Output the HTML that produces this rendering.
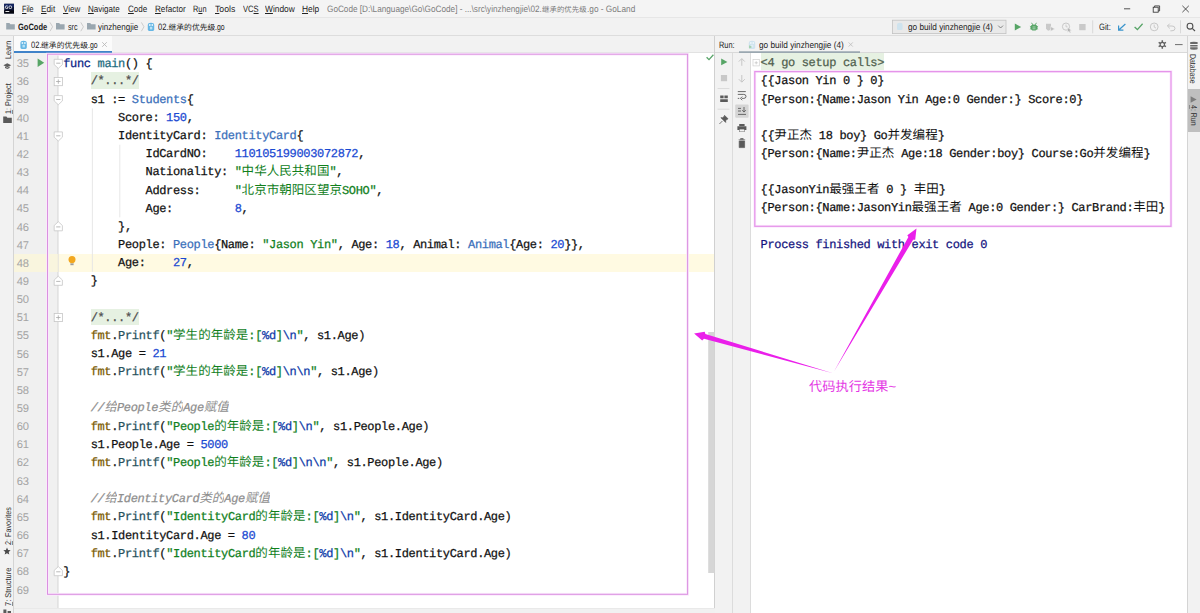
<!DOCTYPE html>
<html lang="zh">
<head>
<meta charset="utf-8">
<title>GoCode - GoLand</title>
<style>
*{box-sizing:border-box;margin:0;padding:0}
html,body{width:1200px;height:613px;overflow:hidden;background:#fff}
body{font-family:"Liberation Sans","Noto Sans CJK SC",sans-serif;color:#1a1a1a;text-rendering:geometricPrecision}
#app{position:relative;width:1200px;height:613px;overflow:hidden;background:#f2f2f2}
.abs{position:absolute}
/* ---------- top bars ---------- */
#menubar{position:absolute;left:0;top:0;width:1200px;height:18px;background:#f4f4f4;border-bottom:1px solid #e6e6e6}
#navbar{position:absolute;left:0;top:18px;width:1200px;height:18px;background:#f2f2f2;border-bottom:1px solid #dddddd}
.u{position:absolute;white-space:pre;font-size:9.2px;line-height:11px;transform-origin:0 0;color:#222}
.u u{text-decoration:underline;text-underline-offset:1px;text-decoration-thickness:0.7px}
.cj{display:inline-block;overflow:hidden;white-space:nowrap;vertical-align:top;letter-spacing:0;text-align:justify;text-align-last:justify}
.cj{position:relative}
/* ---------- side strips ---------- */
#lstrip{position:absolute;left:0;top:36px;width:14px;height:577px;background:#f2f2f2;border-right:1px solid #d4d4d4}
#rstrip{position:absolute;left:1187px;top:36px;width:13px;height:577px;background:#f2f2f2;border-left:1px solid #d4d4d4}
.vt u{text-decoration-color:#8c8c8c;text-decoration-thickness:0.6px;text-underline-offset:0.5px}
.vt{position:absolute;white-space:nowrap;font-size:8.4px;color:#2e2e2e;transform-origin:0 0;line-height:10px}
/* ---------- editor ---------- */
#tabs{position:absolute;left:14px;top:36px;width:701px;height:17px;background:#f2f2f2;border-bottom:1px solid #e2e2e2}
#tab1{position:absolute;left:0;top:0;width:98px;height:17px;background:#fbfbfb;border-bottom:2px solid #4083c9}
#editor{position:absolute;left:14px;top:53px;width:700px;height:555px;background:#fff;overflow:hidden}
#gutter{position:absolute;left:0;top:0;width:44px;height:555px;background:#f0f0f0;border-right:1px solid #e4e4e4}
#curline{position:absolute;left:0;top:201px;width:700px;height:18.1px;background:#fffae2}
#curline i{position:absolute;left:0;top:0;width:44px;height:18.1px;background:#f9f5de}
.ln{position:absolute;left:2.7px;margin-top:1.3px;width:14px;font-family:"Liberation Sans",sans-serif;font-size:11.2px;line-height:18.15px;color:#a4a4a4;letter-spacing:-0.2px;white-space:pre}
pre{font-family:"Liberation Mono","Noto Sans CJK SC",monospace;font-size:12px;letter-spacing:-0.34px;line-height:18.15px;white-space:pre;color:#111;-webkit-text-stroke:0.25px currentColor}
#code{position:absolute;left:49.2px;top:1.5px}
pre .cj{font-size:12.5px;-webkit-text-stroke:0}
.k{color:#0a1f86}.fn{color:#1d6c80}.ty{color:#3a6fba}.n{color:#1a49d2}.s{color:#10801c}.e{color:#0e3aa8}
.pk{color:#7a5a00}.c{color:#8e8e8e;font-style:italic}.fd{background:#e6f1e2;color:#4f4f4f;padding:2.2px 0 0.8px}.call{color:#26505c}
.guide{position:absolute;width:1px;background:#e6e6e6}
/* ---------- run panel ---------- */
#run{position:absolute;left:714px;top:36px;width:473px;height:577px;background:#fff;border-left:1px solid #d0d0d0}
#runhead{position:absolute;left:0;top:0;width:473px;height:17px;background:#f2f2f2;border-bottom:1px solid #d9d9d9}
#rt1{position:absolute;left:0;top:17px;width:18px;height:560px;background:#f2f2f2;border-right:1px solid #dcdcdc}
#rt2{position:absolute;left:18px;top:17px;width:18px;height:560px;background:#f2f2f2;border-right:1px solid #dcdcdc}
#console{position:absolute;left:45.6px;top:18.2px}
#console .fd{background:#e6f1e2;color:#50604e;padding:3.2px 0 0.6px}
.pf{color:#141480}
svg{position:absolute;left:0;top:0;overflow:visible}
</style>
</head>
<body>
<div id="app">


<!-- MENUBAR -->
<div id="menubar">
<span class="u" style="left:22px;top:4.3px;transform:scaleX(0.783)"><u>F</u>ile</span>
<span class="u" style="left:41px;top:4.3px;transform:scaleX(0.896)"><u>E</u>dit</span>
<span class="u" style="left:63px;top:4.3px;transform:scaleX(0.871)"><u>V</u>iew</span>
<span class="u" style="left:88px;top:4.3px;transform:scaleX(0.871)"><u>N</u>avigate</span>
<span class="u" style="left:128px;top:4.3px;transform:scaleX(0.874)"><u>C</u>ode</span>
<span class="u" style="left:155px;top:4.3px;transform:scaleX(0.884)"><u>R</u>efactor</span>
<span class="u" style="left:193.3px;top:4.3px;transform:scaleX(0.801)">R<u>u</u>n</span>
<span class="u" style="left:215px;top:4.3px;transform:scaleX(0.942)"><u>T</u>ools</span>
<span class="u" style="left:243px;top:4.3px;transform:scaleX(0.825)">VC<u>S</u></span>
<span class="u" style="left:265px;top:4.3px;transform:scaleX(0.912)"><u>W</u>indow</span>
<span class="u" style="left:301.7px;top:4.3px;transform:scaleX(0.91)"><u>H</u>elp</span>
<span class="u" style="left:326.8px;top:4.3px;transform:scaleX(0.893);color:#7c7c7c">GoCode [D:\Language\Go\GoCode] - ...\src\yinzhengjie\02.</span>
<span class="cj abs" style="left:542px;top:4.3px;width:44.6px;font-size:7.4px;line-height:11px;color:#7c7c7c">继承的优先级</span>
<span class="u" style="left:586.6px;top:4.3px;transform:scaleX(0.9);color:#7c7c7c">.go - GoLand</span>
</div>

<!-- NAVBAR -->
<div id="navbar">
<span class="u" style="left:18px;top:3.8px;transform:scaleX(0.817);font-weight:bold">GoCode</span>
<span class="u" style="left:68px;top:3.8px;transform:scaleX(0.784)">src</span>
<span class="u" style="left:98px;top:3.8px;transform:scaleX(0.874)">yinzhengjie</span>
<span class="u" style="left:158px;top:3.8px;transform:scaleX(0.822)">02.</span>
<span class="cj abs" style="left:168.4px;top:3.8px;width:47px;font-size:7.8px;line-height:11px;color:#222">继承的优先级</span>
<span class="u" style="left:215.4px;top:3.8px;transform:scaleX(0.751)">.go</span>
</div>

<!-- LEFT STRIP -->
<div id="lstrip"></div>

<!-- TABS -->
<div id="tabs"><div id="tab1"></div>
<span class="u" style="left:16.5px;top:3.6px;transform:scaleX(0.822)">02.</span>
<span class="cj abs" style="left:27px;top:3.6px;width:47px;font-size:7.8px;line-height:11px;color:#222">继承的优先级</span>
<span class="u" style="left:74px;top:3.6px;transform:scaleX(0.751)">.go</span>
</div>

<!-- EDITOR -->
<div id="editor">
<div id="gutter"></div>
<div id="curline"><i></i></div>
<div id="lnums">
<div class="ln" style="top:0.90px">35</div>
<div class="ln" style="top:19.05px">36</div>
<div class="ln" style="top:37.20px">39</div>
<div class="ln" style="top:55.35px">40</div>
<div class="ln" style="top:73.50px">41</div>
<div class="ln" style="top:91.65px">42</div>
<div class="ln" style="top:109.80px">43</div>
<div class="ln" style="top:127.95px">44</div>
<div class="ln" style="top:146.10px">45</div>
<div class="ln" style="top:164.25px">46</div>
<div class="ln" style="top:182.40px">47</div>
<div class="ln" style="top:200.55px">48</div>
<div class="ln" style="top:218.70px">49</div>
<div class="ln" style="top:236.85px">50</div>
<div class="ln" style="top:255.00px">51</div>
<div class="ln" style="top:273.15px">55</div>
<div class="ln" style="top:291.30px">56</div>
<div class="ln" style="top:309.45px">57</div>
<div class="ln" style="top:327.60px">58</div>
<div class="ln" style="top:345.75px">59</div>
<div class="ln" style="top:363.90px">60</div>
<div class="ln" style="top:382.05px">61</div>
<div class="ln" style="top:400.20px">62</div>
<div class="ln" style="top:418.35px">63</div>
<div class="ln" style="top:436.50px">64</div>
<div class="ln" style="top:454.65px">65</div>
<div class="ln" style="top:472.80px">66</div>
<div class="ln" style="top:490.95px">67</div>
<div class="ln" style="top:509.10px">68</div>
<div class="ln" style="top:527.25px">69</div>
</div>
<pre id="code"><span class="k">func</span> <span class="fn">main</span>() {
    <span class="fd">/*...*/</span>
    s1 := <span class="ty">Students</span>{
        Score: <span class="n">150</span>,
        IdentityCard: <span class="ty">IdentityCard</span>{
            IdCardNO:    <span class="n">110105199003072872</span>,
            Nationality: <span class="s">"<span class="cj" style="width:87.85px">中华人民共和国</span>"</span>,
            Address:     <span class="s">"<span class="cj" style="width:100.4px">北京市朝阳区望京</span>SOHO"</span>,
            Age:         <span class="n">8</span>,
        },
        People: <span class="ty">People</span>{Name: <span class="s">"Jason Yin"</span>, Age: <span class="n">18</span>, Animal: <span class="ty">Animal</span>{Age: <span class="n">20</span>}},
        Age:    <span class="n">27</span>,
    }

    <span class="fd">/*...*/</span>
    <span class="pk">fmt</span>.<span class="call">Printf</span>(<span class="s">"<span class="cj" style="width:75.3px">学生的年龄是</span>:[<span class="e">%d</span>]<span class="e">\n</span>"</span>, s1.Age)
    s1.Age = <span class="n">21</span>
    <span class="pk">fmt</span>.<span class="call">Printf</span>(<span class="s">"<span class="cj" style="width:75.3px">学生的年龄是</span>:[<span class="e">%d</span>]<span class="e">\n\n</span>"</span>, s1.Age)

    <span class="c">//<span class="cj" style="width:12.55px">给</span>People<span class="cj" style="width:25.1px">类的</span>Age<span class="cj" style="width:25.1px">赋值</span></span>
    <span class="pk">fmt</span>.<span class="call">Printf</span>(<span class="s">"People<span class="cj" style="width:50.2px">的年龄是</span>:[<span class="e">%d</span>]<span class="e">\n</span>"</span>, s1.People.Age)
    s1.People.Age = <span class="n">5000</span>
    <span class="pk">fmt</span>.<span class="call">Printf</span>(<span class="s">"People<span class="cj" style="width:50.2px">的年龄是</span>:[<span class="e">%d</span>]<span class="e">\n\n</span>"</span>, s1.People.Age)

    <span class="c">//<span class="cj" style="width:12.55px">给</span>IdentityCard<span class="cj" style="width:25.1px">类的</span>Age<span class="cj" style="width:25.1px">赋值</span></span>
    <span class="pk">fmt</span>.<span class="call">Printf</span>(<span class="s">"IdentityCard<span class="cj" style="width:50.2px">的年龄是</span>:[<span class="e">%d</span>]<span class="e">\n</span>"</span>, s1.IdentityCard.Age)
    s1.IdentityCard.Age = <span class="n">80</span>
    <span class="pk">fmt</span>.<span class="call">Printf</span>(<span class="s">"IdentityCard<span class="cj" style="width:50.2px">的年龄是</span>:[<span class="e">%d</span>]<span class="e">\n</span>"</span>, s1.IdentityCard.Age)
}
</pre>
</div>

<!-- RUN PANEL -->
<div id="run">
<div id="runhead">
<span class="u" style="left:4.4px;top:4px;transform:scaleX(0.803)">Run:</span>
<span class="u" style="left:43.6px;top:4px;transform:scaleX(0.897)">go build yinzhengjie (4)</span>
</div>
<div id="rt1"></div>
<div id="rt2"></div>
<pre id="console"><span class="fd">&lt;4 go setup calls&gt;</span>
{{Jason Yin 0 } 0}
{Person:{Name:Jason Yin Age:0 Gender:} Score:0}

{{<span class="cj" style="width:37.65px">尹正杰</span> 18 boy} Go<span class="cj" style="width:50.2px">并发编程</span>}
{Person:{Name:<span class="cj" style="width:37.65px">尹正杰</span> Age:18 Gender:boy} Course:Go<span class="cj" style="width:50.2px">并发编程</span>}

{{JasonYin<span class="cj" style="width:50.2px">最强王者</span> 0 } <span class="cj" style="width:25.1px">丰田</span>}
{Person:{Name:JasonYin<span class="cj" style="width:50.2px">最强王者</span> Age:0 Gender:} CarBrand:<span class="cj" style="width:25.1px">丰田</span>}

<span class="pf">Process finished with exit code 0</span>
</pre>
</div>

<!-- RIGHT STRIP -->
<div id="rstrip"><div class="abs" style="left:0;top:53.1px;width:13px;height:43.4px;background:#bfbfbf"></div></div>

<!-- bottom bar -->
<div class="abs" style="left:14px;top:608px;width:701px;height:5px;background:#f1f1f1;border-top:1px solid #e9e9e9"></div>

<div class="vt" style="left:3.2px;top:59.2px;transform:rotate(-90deg) scaleX(0.85)">Learn</div>
<div class="vt" style="left:3.2px;top:114.2px;transform:rotate(-90deg) scaleX(0.87)"><u>1</u>: Project</div>
<div class="vt" style="left:3.2px;top:544.6px;transform:rotate(-90deg) scaleX(0.864)"><u>2</u>: Favorites</div>
<div class="vt" style="left:3.2px;top:605.9px;transform:rotate(-90deg) scaleX(0.885)"><u>7</u>: Structure</div>
<div class="vt" style="left:1198.4px;top:53.6px;transform:rotate(90deg) scaleX(0.828)">Database</div>
<div class="vt" style="left:1198.6px;top:105.4px;transform:rotate(90deg) scaleX(0.83)"><u>4</u>: Run</div>
<!-- ICONS -->
<svg id="icons" width="1200" height="613" viewBox="0 0 1200 613">
<rect x="4.2" y="3.8" width="9.8" height="9.7" fill="#0b1438"/><rect x="4.2" y="3.8" width="9.8" height="3.2" fill="#13245e"/><rect x="4.2" y="10.2" width="9.8" height="3.3" fill="#04060f"/>
<path d="M7.6,5.9 h-1.3 q-0.8,0 -0.8,0.8 v1 q0,0.8 0.8,0.8 h1.3 v-1.3 h-0.8" fill="none" stroke="#fff" stroke-width="0.8"/>
<rect x="9" y="5.9" width="2.6" height="2.6" rx="0.9" fill="none" stroke="#fff" stroke-width="0.8"/>
<rect x="5.4" y="11" width="3.9" height="0.9" fill="#fff"/>
<path d="M1124,8.8 h6.2" stroke="#2b2b2b" stroke-width="0.8"/>
<path d="M1154.6,7.2 v-1.3 h5 v5 h-1.3" fill="none" stroke="#2b2b2b" stroke-width="0.8"/><rect x="1153.2" y="7.2" width="5" height="5" fill="none" stroke="#2b2b2b" stroke-width="0.8"/>
<path d="M1182.4,5.8 l6.4,6.4 M1188.8,5.8 l-6.4,6.4" stroke="#2b2b2b" stroke-width="0.8"/>
<path d="M6.2,23.0 h3.2 l1,1.2 h4.4 v5.3 h-8.6 z" fill="#9aa7b0"/>
<path d="M56.0,23.0 h3.2 l1,1.2 h4.4 v5.3 h-8.6 z" fill="#9aa7b0"/>
<path d="M87.0,23.0 h3.2 l1,1.2 h4.4 v5.3 h-8.6 z" fill="#9aa7b0"/>
<path d="M50.0,22.4 l2.6,4.4 l-2.6,4.4" fill="none" stroke="#c2c2c2" stroke-width="0.8"/>
<path d="M80.8,22.4 l2.6,4.4 l-2.6,4.4" fill="none" stroke="#c2c2c2" stroke-width="0.8"/>
<path d="M141.4,22.4 l2.6,4.4 l-2.6,4.4" fill="none" stroke="#c2c2c2" stroke-width="0.8"/>
<path d="M147.8,25.2 q0,-2.4 3.2,-2.4 q3.2,0 3.2,2.4 v4.4 q0,1.4 -1.4,1.4 h-3.6 q-1.4,0 -1.4,-1.4 z" fill="#66b6e4"/><circle cx="149.8" cy="25.0" r="0.9" fill="#e8f6fd"/><circle cx="152.3" cy="25.0" r="0.9" fill="#e8f6fd"/><path d="M149.9,26.8 h2.4 v2.6 h-2.4 z" fill="#b9e2f5"/>
<path d="M20.4,43.2 q0,-2.4 3.2,-2.4 q3.2,0 3.2,2.4 v4.4 q0,1.4 -1.4,1.4 h-3.6 q-1.4,0 -1.4,-1.4 z" fill="#66b6e4"/><circle cx="22.4" cy="43.0" r="0.9" fill="#e8f6fd"/><circle cx="24.9" cy="43.0" r="0.9" fill="#e8f6fd"/><path d="M22.5,44.8 h2.4 v2.6 h-2.4 z" fill="#b9e2f5"/>
<path d="M102.2,42.2 l4.6,4.6 M106.8,42.2 l-4.6,4.6" stroke="#b4b4b4" stroke-width="0.8"/>
<rect x="892.4" y="20.2" width="113.6" height="13.4" fill="#e9e9e9" stroke="#c2c2c2" stroke-width="0.8"/>
<path d="M897.0,25.0 q0,-2.2 2.8,-2.2 q2.8,0 2.8,2.2 v3.8 q0,1.2 -1.2,1.2 h-3.2 q-1.2,0 -1.2,-1.2 z" fill="#cfe3ee"/>
<path d="M998.2,25.6 l2.4,2.4 l2.4,-2.4" fill="none" stroke="#6a6a6a" stroke-width="0.8"/>
<path d="M1014.8,23.6 l6.4,3.4 l-6.4,3.4 z" fill="#57a566"/>
<path d="M1032.7,24.8 l-1.1,-2 M1035.3,24.8 l1.1,-2" stroke="#57a566" stroke-width="0.9"/><ellipse cx="1034" cy="27.5" rx="3.5" ry="3.1" fill="#57a566"/><path d="M1029.9,26.2 l1,0.6 M1038.1,26.2 l-1,0.6 M1029.9,29.2 l1,-0.5 M1038.1,29.2 l-1,-0.5" stroke="#57a566" stroke-width="0.8"/><path d="M1032.5,27 h3 M1032.5,28.8 h3" stroke="#cfe8d4" stroke-width="0.7"/>
<path d="M1046,23.8 h5 v4.6 q-1,1.8 -2.5,2.4 q-1.5,-0.6 -2.5,-2.4 z" fill="#c9c9c9"/><path d="M1050.6,26.6 l4.2,2.3 l-4.2,2.3 z" fill="#bdbdbd" stroke="#f2f2f2" stroke-width="0.5"/>
<circle cx="1066" cy="26.6" r="3.6" fill="none" stroke="#c4c4c4" stroke-width="0.9"/><path d="M1066,24.6 v2.2 h1.6" fill="none" stroke="#c4c4c4" stroke-width="0.8"/><path d="M1067.6,27.4 v5 l1.3,-1.2 l1,1.9 l1,-0.5 l-1,-1.9 l1.8,-0.1 z" fill="#b0b0b0" stroke="#f2f2f2" stroke-width="0.5"/>
<rect x="1079.2" y="24" width="6.4" height="6.2" fill="#c9c9c9"/>
<path d="M1092.7,20.3 v13" stroke="#d2d2d2" stroke-width="0.8"/>
<path d="M1125.4,24 l-6.4,5.8 M1118.6,25.4 v4.8 h4.8" fill="none" stroke="#3a94cc" stroke-width="1.2"/>
<path d="M1134.6,27 l2.8,2.6 l5.2,-5.8" fill="none" stroke="#58a468" stroke-width="1.3"/>
<circle cx="1154.2" cy="26.9" r="3.9" fill="none" stroke="#c2c2c2" stroke-width="0.9"/><path d="M1154.2,24.6 v2.5 l1.8,1" fill="none" stroke="#c2c2c2" stroke-width="0.8"/>
<path d="M1167.6,26 h4.4 q3,0 3,2.4 q0,2.4 -3,2.4 h-1.6 M1169.8,23.6 l-2.4,2.4 l2.4,2.4" fill="none" stroke="#c2c2c2" stroke-width="0.9"/>
<path d="M1180.5,20.3 v13" stroke="#d2d2d2" stroke-width="0.8"/>
<circle cx="1190" cy="26.2" r="2.9" fill="none" stroke="#505050" stroke-width="1.1"/><path d="M1192.2,28.4 l2.8,2.6" stroke="#505050" stroke-width="1.2"/>
<path d="M748.8,43.2 q0,-2.4 3.2,-2.4 q3.2,0 3.2,2.4 v4.4 q0,1.4 -1.4,1.4 h-3.6 q-1.4,0 -1.4,-1.4 z" fill="#cfe3ee"/><circle cx="750.8" cy="43.0" r="0.9" fill="#eef6fa"/><circle cx="753.3" cy="43.0" r="0.9" fill="#eef6fa"/><path d="M750.9,44.8 h2.4 v2.6 h-2.4 z" fill="#e0eef5"/>
<path d="M749.1,45.2 l3,1.7 l-3,1.7 z" fill="#9fd0a8"/>
<path d="M848.6,42.4 l4.2,4.2 M852.8,42.4 l-4.2,4.2" stroke="#bdbdbd" stroke-width="0.8"/>
<path d="M739,52.1 h121" stroke="#9aa7b0" stroke-width="1.6"/>
<path d="M1162.3,40.3 v8.4 M1158.66,42.4 l7.28,4.2 M1158.66,46.6 l7.28,-4.2" stroke="#626262" stroke-width="1.5"/><circle cx="1162.3" cy="44.5" r="2.7" fill="#626262"/><circle cx="1162.3" cy="44.5" r="1.5" fill="#f2f2f2"/>
<path d="M1175,44.6 h7.6" stroke="#5e5e5e" stroke-width="0.9"/>
<path d="M721.2,58.5 l6.2,3.4 l-6.2,3.4 z" fill="#57a566"/>
<rect x="720.9" y="75" width="6.2" height="6.2" fill="#c8c8c8"/>
<path d="M717.6,88.5 h11.8 M717.6,109.2 h11.8" stroke="#d6d6d6" stroke-width="0.8"/>
<path d="M720.2,95.6 h3.4 v2.6 h-3.4 z M724.4,95.6 h3.4 v2.6 h-3.4 z M720.2,99.2 h7.6 v2.8 h-7.6 z" fill="#5a5a5a"/>
<path d="M724.6,115.4 l3.4,3.4 l-1,0.4 l-1.4,1.6 l0.1,1.6 l-4.7,-4.7 l1.6,0.1 l1.6,-1.4 z M722.4,121 l-3,3" fill="#5a5a5a" stroke="#5a5a5a" stroke-width="0.8"/>
<path d="M741.8,65.8 v-7 M738.8,61.6 l3,-3 l3,3" fill="none" stroke="#c2c2c2" stroke-width="0.9"/>
<path d="M741.8,75 v7 M738.8,79.2 l3,3 l3,-3" fill="none" stroke="#c2c2c2" stroke-width="0.9"/>
<path d="M737.8,91.6 h8 M737.8,94.4 h6 q2.2,0 2.2,2 q0,2 -2.2,2 h-2 M742.2,96.6 l-1.8,1.8 l1.8,1.8 M737.8,98.4 h1.4" fill="none" stroke="#5a5a5a" stroke-width="0.9"/>
<rect x="735.2" y="104.4" width="13.4" height="13.4" rx="1" fill="#d5d5d5"/>
<path d="M738,108.4 h3 M738,111 h3 M738,114.4 h8 M744,107 v5 M742.2,110.2 l1.8,1.9 l1.8,-1.9" fill="none" stroke="#5a5a5a" stroke-width="0.9"/>
<path d="M739.2,124 h5.4 v2 h-5.4 z M737.4,126.2 h9 v3.8 h-9 z M739.2,129 h5.4 v3 h-5.4 z" fill="#5a5a5a"/><path d="M739.6,129.4 h4.6 v2.2 h-4.6 z" fill="#f2f2f2"/>
<path d="M738.6,139.8 h6.6 M740.6,139.6 v-1 h2.6 v1 M739.2,141 h5.4 v6.6 h-5.4 z" fill="#5a5a5a" stroke="#5a5a5a" stroke-width="0.7"/>
<rect x="753" y="59.6" width="6.3" height="6.3" fill="#fff" stroke="#d0d0d0" stroke-width="0.7"/><path d="M754.6,62.8 h3.2 M756.2,61.2 v3.2" stroke="#c0c0c0" stroke-width="0.7"/>
<path d="M37.6,58.4 l6.6,4.3 l-6.6,4.3 z" fill="#57a566"/>
<path d="M58.3,54 v554" stroke="#dedede" stroke-width="0.8"/>
<path d="M54.2,59.3 h8.2 v5.3 l-4.1,3.8 l-4.1,-3.8 z" fill="#fff" stroke="#c6c6c6" stroke-width="0.8"/><path d="M56.2,63.2 h4.2" stroke="#a8a8a8" stroke-width="0.8"/><rect x="54.2" y="77.5" width="8.2" height="8.2" fill="#fff" stroke="#c6c6c6" stroke-width="0.8"/><path d="M56.1,81.5 h4.4 M58.3,79.4 v4.4" stroke="#a8a8a8" stroke-width="0.8"/><path d="M54.2,95.6 h8.2 v5.3 l-4.1,3.8 l-4.1,-3.8 z" fill="#fff" stroke="#c6c6c6" stroke-width="0.8"/><path d="M56.2,99.5 h4.2" stroke="#a8a8a8" stroke-width="0.8"/><path d="M54.2,131.9 h8.2 v5.3 l-4.1,3.8 l-4.1,-3.8 z" fill="#fff" stroke="#c6c6c6" stroke-width="0.8"/><path d="M56.2,135.8 h4.2" stroke="#a8a8a8" stroke-width="0.8"/><path d="M54.2,230.8 h8.2 v-5.3 l-4.1,-3.8 l-4.1,3.8 z" fill="#fff" stroke="#c6c6c6" stroke-width="0.8"/><path d="M56.2,226.9 h4.2" stroke="#a8a8a8" stroke-width="0.8"/><path d="M54.2,285.3 h8.2 v-5.3 l-4.1,-3.8 l-4.1,3.8 z" fill="#fff" stroke="#c6c6c6" stroke-width="0.8"/><path d="M56.2,281.4 h4.2" stroke="#a8a8a8" stroke-width="0.8"/><rect x="54.2" y="313.4" width="8.2" height="8.2" fill="#fff" stroke="#c6c6c6" stroke-width="0.8"/><path d="M56.1,317.5 h4.4 M58.3,315.3 v4.4" stroke="#a8a8a8" stroke-width="0.8"/><path d="M54.2,575.7 h8.2 v-5.3 l-4.1,-3.8 l-4.1,3.8 z" fill="#fff" stroke="#c6c6c6" stroke-width="0.8"/><path d="M56.2,571.8 h4.2" stroke="#a8a8a8" stroke-width="0.8"/>
<circle cx="72" cy="259.6" r="3.5" fill="#f2a71f"/><path d="M70.2,262.2 h3.6 v1 h-3.6 z" fill="#f2a71f"/><path d="M70.4,263.4 h3.2 v1.8 h-3.2 z" fill="#9c9c9c"/>
<path d="M706.6,57.2 l2.4,2.4 l4.4,-4.8" fill="none" stroke="#58a468" stroke-width="1.3"/>
<rect x="708.2" y="332" width="6.3" height="241" fill="#d6d6d6"/>
<path d="M3.4,65.2 l3.9,-2 l3.9,2 l-3.9,2 z M5,66.6 v1.4 l2.3,1.1 l2.3,-1.1 v-1.4 l-2.3,1.2 z" fill="#5e5e5e"/>
<path d="M3.2,116.6 h3.2 l1,1.2 h4.4 v5.3 h-8.6 z" fill="#5a5a5a"/>
<path d="M7,547.6 l1.05,2.4 l2.6,0.25 l-1.95,1.7 l0.6,2.55 l-2.3,-1.35 l-2.3,1.35 l0.6,-2.55 l-1.95,-1.7 l2.6,-0.25 z" fill="#4a4a4a"/>
<path d="M3.4,609.6 h3 v3.4 h-3 z M7.6,611 h3.4 v2 h-3.4 z" fill="#5a5a5a"/>
<path d="M1190.2,42.6 h7.4 v1.5 h-7.4 z M1190.2,44.9 h7.4 v1.5 h-7.4 z M1190.2,47.2 h7.4 v1.5 h-7.4 z" fill="#6a6a6a"/><ellipse cx="1193.9" cy="42.6" rx="3.7" ry="0.9" fill="#6a6a6a"/><ellipse cx="1193.9" cy="48.8" rx="3.7" ry="0.9" fill="#6a6a6a"/>
<path d="M1190.6,96.2 l6,3.3 l-6,3.3 z" fill="#7c7c7c"/>
<path d="M92.4,108.4 v163.3 M119.8,144.8 v72.6" stroke="#e4e4e4" stroke-width="0.9"/>
</svg>
<!-- ANNOTATIONS -->
<span class="u" style="left:907.6px;top:21.6px;transform:scaleX(0.897)">go build yinzhengjie (4)</span>
<span class="u" style="left:1098.6px;top:21.6px;transform:scaleX(0.825)">Git:</span>

<svg id="annot" width="1200" height="613" viewBox="0 0 1200 613">
<rect x="47.5" y="54.2" width="640.1" height="540.1" fill="none" stroke="#fbe9fc" stroke-width="2.8"/><rect x="47.5" y="54.2" width="640.1" height="540.1" fill="none" stroke="#da90e0" stroke-width="1"/>
<rect x="754.8" y="71.6" width="416.2" height="154.7" fill="none" stroke="#fbe9fc" stroke-width="2.8"/><rect x="754.8" y="71.6" width="416.2" height="154.7" fill="none" stroke="#e594ea" stroke-width="1.25"/>
<polygon points="833.0,373.3 705.4,334.0 704.7,331.8 694.1,333.4 702.2,340.4 704.0,338.8" fill="#ea1fea"/>
<polygon points="834.0,371.5 913.1,239.7 915.2,239.8 916.5,228.4 907.3,235.2 908.4,237.0" fill="#ea1fea"/>
</svg>
<div class="abs" style="left:809px;top:378.9px;font-size:13.2px;line-height:16px;color:#e438e4;white-space:nowrap"><span class="cj lbl" style="width:79.4px">代码执行结果</span>~</div>

</div>
</body>
</html>
